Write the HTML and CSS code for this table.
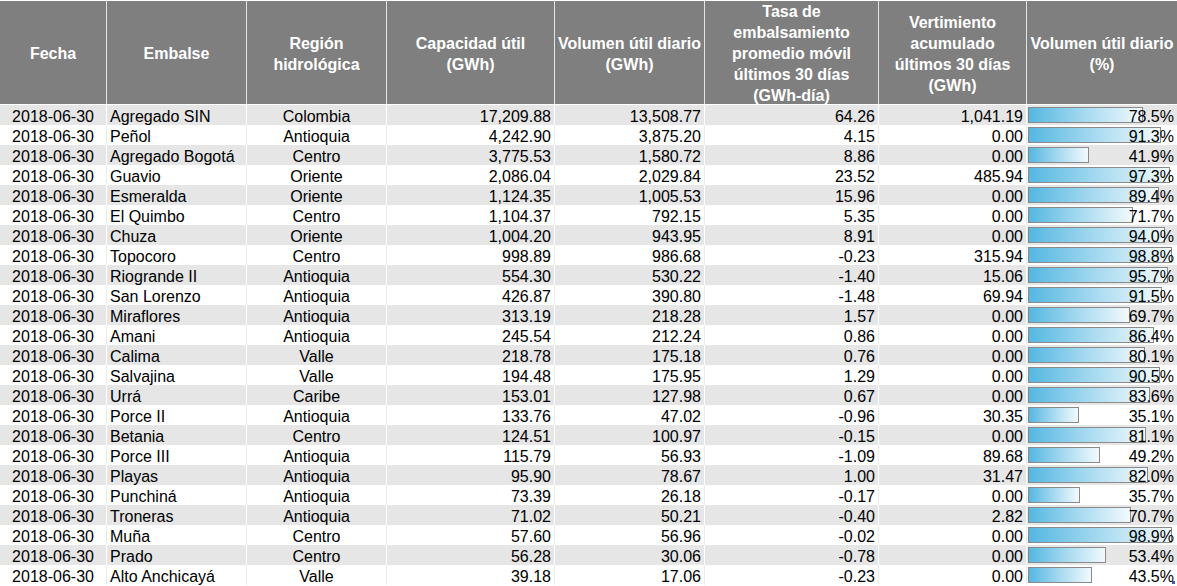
FILE: index.html
```html
<!DOCTYPE html>
<html lang="es">
<head>
<meta charset="utf-8">
<title>Embalses</title>
<link rel="stylesheet" href="styles.css">
</head>
<body>
<div class="sheet">
  <div class="row head">
    <div class="c">Fecha</div>
    <div class="c">Embalse</div>
    <div class="c">Región<br>hidrológica</div>
    <div class="c">Capacidad útil<br>(GWh)</div>
    <div class="c">Volumen útil diario<br>(GWh)</div>
    <div class="c">Tasa de<br>embalsamiento<br>promedio móvil<br>últimos 30 días<br>(GWh-día)</div>
    <div class="c">Vertimiento<br>acumulado<br>últimos 30 días<br>(GWh)</div>
    <div class="c">Volumen útil diario<br>(%)</div>
  </div>

  <div class="row odd"><div class="c date">2018-06-30</div><div class="c name">Agregado SIN</div><div class="c reg">Colombia</div><div class="c num">17,209.88</div><div class="c num">13,508.77</div><div class="c num">64.26</div><div class="c num">1,041.19</div><div class="c pct"><div class="track"><div class="bar" style="width:78.5%"></div></div><span class="val">78.5%</span></div></div>
  <div class="row even"><div class="c date">2018-06-30</div><div class="c name">Peñol</div><div class="c reg">Antioquia</div><div class="c num">4,242.90</div><div class="c num">3,875.20</div><div class="c num">4.15</div><div class="c num">0.00</div><div class="c pct"><div class="track"><div class="bar" style="width:91.3%"></div></div><span class="val">91.3%</span></div></div>
  <div class="row odd"><div class="c date">2018-06-30</div><div class="c name">Agregado Bogotá</div><div class="c reg">Centro</div><div class="c num">3,775.53</div><div class="c num">1,580.72</div><div class="c num">8.86</div><div class="c num">0.00</div><div class="c pct"><div class="track"><div class="bar" style="width:41.9%"></div></div><span class="val">41.9%</span></div></div>
  <div class="row even"><div class="c date">2018-06-30</div><div class="c name">Guavio</div><div class="c reg">Oriente</div><div class="c num">2,086.04</div><div class="c num">2,029.84</div><div class="c num">23.52</div><div class="c num">485.94</div><div class="c pct"><div class="track"><div class="bar" style="width:97.3%"></div></div><span class="val">97.3%</span></div></div>
  <div class="row odd"><div class="c date">2018-06-30</div><div class="c name">Esmeralda</div><div class="c reg">Oriente</div><div class="c num">1,124.35</div><div class="c num">1,005.53</div><div class="c num">15.96</div><div class="c num">0.00</div><div class="c pct"><div class="track"><div class="bar" style="width:89.4%"></div></div><span class="val">89.4%</span></div></div>
  <div class="row even"><div class="c date">2018-06-30</div><div class="c name">El Quimbo</div><div class="c reg">Centro</div><div class="c num">1,104.37</div><div class="c num">792.15</div><div class="c num">5.35</div><div class="c num">0.00</div><div class="c pct"><div class="track"><div class="bar" style="width:71.7%"></div></div><span class="val">71.7%</span></div></div>
  <div class="row odd"><div class="c date">2018-06-30</div><div class="c name">Chuza</div><div class="c reg">Oriente</div><div class="c num">1,004.20</div><div class="c num">943.95</div><div class="c num">8.91</div><div class="c num">0.00</div><div class="c pct"><div class="track"><div class="bar" style="width:94.0%"></div></div><span class="val">94.0%</span></div></div>
  <div class="row even"><div class="c date">2018-06-30</div><div class="c name">Topocoro</div><div class="c reg">Centro</div><div class="c num">998.89</div><div class="c num">986.68</div><div class="c num">-0.23</div><div class="c num">315.94</div><div class="c pct"><div class="track"><div class="bar" style="width:98.8%"></div></div><span class="val">98.8%</span></div></div>
  <div class="row odd"><div class="c date">2018-06-30</div><div class="c name">Riogrande II</div><div class="c reg">Antioquia</div><div class="c num">554.30</div><div class="c num">530.22</div><div class="c num">-1.40</div><div class="c num">15.06</div><div class="c pct"><div class="track"><div class="bar" style="width:95.7%"></div></div><span class="val">95.7%</span></div></div>
  <div class="row even"><div class="c date">2018-06-30</div><div class="c name">San Lorenzo</div><div class="c reg">Antioquia</div><div class="c num">426.87</div><div class="c num">390.80</div><div class="c num">-1.48</div><div class="c num">69.94</div><div class="c pct"><div class="track"><div class="bar" style="width:91.5%"></div></div><span class="val">91.5%</span></div></div>
  <div class="row odd"><div class="c date">2018-06-30</div><div class="c name">Miraflores</div><div class="c reg">Antioquia</div><div class="c num">313.19</div><div class="c num">218.28</div><div class="c num">1.57</div><div class="c num">0.00</div><div class="c pct"><div class="track"><div class="bar" style="width:69.7%"></div></div><span class="val">69.7%</span></div></div>
  <div class="row even"><div class="c date">2018-06-30</div><div class="c name">Amani</div><div class="c reg">Antioquia</div><div class="c num">245.54</div><div class="c num">212.24</div><div class="c num">0.86</div><div class="c num">0.00</div><div class="c pct"><div class="track"><div class="bar" style="width:86.4%"></div></div><span class="val">86.4%</span></div></div>
  <div class="row odd"><div class="c date">2018-06-30</div><div class="c name">Calima</div><div class="c reg">Valle</div><div class="c num">218.78</div><div class="c num">175.18</div><div class="c num">0.76</div><div class="c num">0.00</div><div class="c pct"><div class="track"><div class="bar" style="width:80.1%"></div></div><span class="val">80.1%</span></div></div>
  <div class="row even"><div class="c date">2018-06-30</div><div class="c name">Salvajina</div><div class="c reg">Valle</div><div class="c num">194.48</div><div class="c num">175.95</div><div class="c num">1.29</div><div class="c num">0.00</div><div class="c pct"><div class="track"><div class="bar" style="width:90.5%"></div></div><span class="val">90.5%</span></div></div>
  <div class="row odd"><div class="c date">2018-06-30</div><div class="c name">Urrá</div><div class="c reg">Caribe</div><div class="c num">153.01</div><div class="c num">127.98</div><div class="c num">0.67</div><div class="c num">0.00</div><div class="c pct"><div class="track"><div class="bar" style="width:83.6%"></div></div><span class="val">83.6%</span></div></div>
  <div class="row even"><div class="c date">2018-06-30</div><div class="c name">Porce II</div><div class="c reg">Antioquia</div><div class="c num">133.76</div><div class="c num">47.02</div><div class="c num">-0.96</div><div class="c num">30.35</div><div class="c pct"><div class="track"><div class="bar" style="width:35.1%"></div></div><span class="val">35.1%</span></div></div>
  <div class="row odd"><div class="c date">2018-06-30</div><div class="c name">Betania</div><div class="c reg">Centro</div><div class="c num">124.51</div><div class="c num">100.97</div><div class="c num">-0.15</div><div class="c num">0.00</div><div class="c pct"><div class="track"><div class="bar" style="width:81.1%"></div></div><span class="val">81.1%</span></div></div>
  <div class="row even"><div class="c date">2018-06-30</div><div class="c name">Porce III</div><div class="c reg">Antioquia</div><div class="c num">115.79</div><div class="c num">56.93</div><div class="c num">-1.09</div><div class="c num">89.68</div><div class="c pct"><div class="track"><div class="bar" style="width:49.2%"></div></div><span class="val">49.2%</span></div></div>
  <div class="row odd"><div class="c date">2018-06-30</div><div class="c name">Playas</div><div class="c reg">Antioquia</div><div class="c num">95.90</div><div class="c num">78.67</div><div class="c num">1.00</div><div class="c num">31.47</div><div class="c pct"><div class="track"><div class="bar" style="width:82.0%"></div></div><span class="val">82.0%</span></div></div>
  <div class="row even"><div class="c date">2018-06-30</div><div class="c name">Punchiná</div><div class="c reg">Antioquia</div><div class="c num">73.39</div><div class="c num">26.18</div><div class="c num">-0.17</div><div class="c num">0.00</div><div class="c pct"><div class="track"><div class="bar" style="width:35.7%"></div></div><span class="val">35.7%</span></div></div>
  <div class="row odd"><div class="c date">2018-06-30</div><div class="c name">Troneras</div><div class="c reg">Antioquia</div><div class="c num">71.02</div><div class="c num">50.21</div><div class="c num">-0.40</div><div class="c num">2.82</div><div class="c pct"><div class="track"><div class="bar" style="width:70.7%"></div></div><span class="val">70.7%</span></div></div>
  <div class="row even"><div class="c date">2018-06-30</div><div class="c name">Muña</div><div class="c reg">Centro</div><div class="c num">57.60</div><div class="c num">56.96</div><div class="c num">-0.02</div><div class="c num">0.00</div><div class="c pct"><div class="track"><div class="bar" style="width:98.9%"></div></div><span class="val">98.9%</span></div></div>
  <div class="row odd"><div class="c date">2018-06-30</div><div class="c name">Prado</div><div class="c reg">Centro</div><div class="c num">56.28</div><div class="c num">30.06</div><div class="c num">-0.78</div><div class="c num">0.00</div><div class="c pct"><div class="track"><div class="bar" style="width:53.4%"></div></div><span class="val">53.4%</span></div></div>
  <div class="row even"><div class="c date">2018-06-30</div><div class="c name">Alto Anchicayá</div><div class="c reg">Valle</div><div class="c num">39.18</div><div class="c num">17.06</div><div class="c num">-0.23</div><div class="c num">0.00</div><div class="c pct last"><div class="track"><div class="bar" style="width:43.5%"></div></div><span class="val">43.5%</span><span class="handle"></span></div></div>
</div>
</body>
</html>
```

FILE: styles.css
```css
html, body {
  margin: 0;
  padding: 0;
  background: #ffffff;
}

body {
  font-family: "Liberation Sans", Arial, sans-serif;
  font-size: 16px;
  color: #000;
}

.sheet {
  width: 1177px;
  padding-top: 1px;
  display: flex;
  flex-direction: column;
}

.row {
  display: grid;
  grid-template-columns: 106px 139px 139px 167px 149px 173px 147px 150px;
  column-gap: 1px;
  height: 20px;
}

.row .c {
  white-space: nowrap;
  overflow: hidden;
  line-height: 20px;
  box-sizing: border-box;
  padding-top: 2px;
}

.head {
  height: 103px;
  margin-bottom: 1px;
  background: #e4e4e4;
}

.head .c {
  background: #7f7f7f;
  color: #fff;
  font-weight: bold;
  line-height: 21px;
  text-align: center;
  display: flex;
  align-items: center;
  justify-content: center;
  padding-top: 2px;
}

.odd {
  background: #ffffff;
}

.odd .c {
  background: #e6e6e6;
}

.even {
  background: #ececec;
}

.even .c {
  background: #ffffff;
}

.date {
  text-align: center;
}

.name {
  padding-left: 3px;
}

.reg {
  text-align: center;
}

.num {
  text-align: right;
  padding-right: 3px;
}

.row .pct {
  display: grid;
  position: relative;
  padding-top: 0;
}

.track {
  grid-area: 1 / 1;
  width: 146px;
  height: 16px;
  margin: 2px 0 0 1px;
}

.bar {
  height: 100%;
  box-sizing: border-box;
  border: 1px solid #8a8a8a;
  background: linear-gradient(to right, #55b7e1 0%, #a7daf0 50%, #f2fafd 100%);
}

.val {
  grid-area: 1 / 1;
  text-align: right;
  padding-right: 3px;
  padding-top: 2px;
  position: relative;
}

.handle {
  position: absolute;
  right: 2px;
  bottom: 1px;
  width: 3px;
  height: 3px;
  background: #3c5fa6;
}
```
